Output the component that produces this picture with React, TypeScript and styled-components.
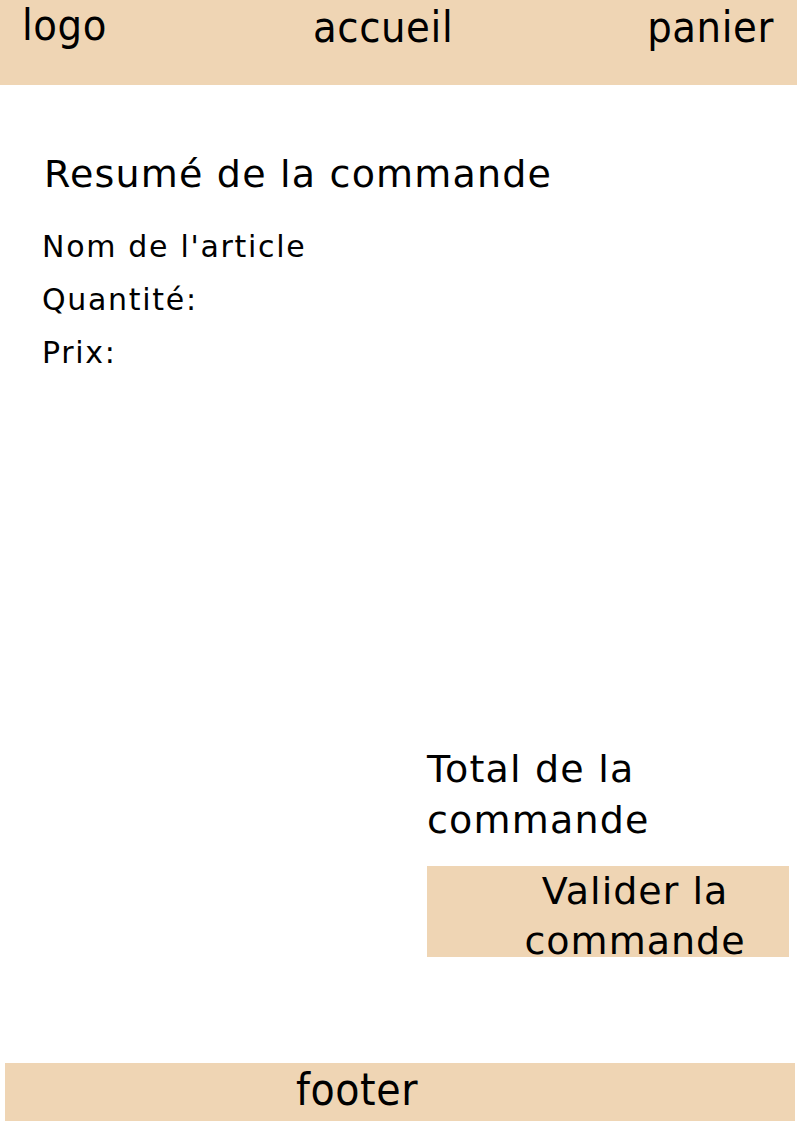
import React from 'react';
import styled, { createGlobalStyle } from 'styled-components';

const GlobalStyle = createGlobalStyle`
  body {
    margin: 0;
    background: #fff;
    color: #000;
    font-family: "DejaVu Sans", Verdana, sans-serif;
  }
`;

const Page = styled.div`
  min-height: 100vh;
  display: flex;
  flex-direction: column;
`;

const Header = styled.header`
  height: 85px;
  background-color: #efd5b4;
  display: flex;
  justify-content: space-between;
  align-items: flex-start;
  padding: 2px 23px 0 22px;
  box-sizing: border-box;
`;

const NavItem = styled.span<{ $shift?: number; $lift?: number }>`
  font-family: "DejaVu Sans Condensed", "DejaVu Sans", sans-serif;
  font-stretch: condensed;
  font-size: 43px;
  letter-spacing: 0.6px;
  margin-left: ${(p) => p.$shift ?? 0}px;
  margin-top: ${(p) => -(p.$lift ?? 0)}px;
`;

const Main = styled.main`
  flex: 1;
  display: flex;
  flex-direction: column;
  padding: 67px 8px 0 42px;
`;

const Title = styled.h1`
  font-size: 38px;
  font-weight: normal;
  margin: 0 0 24px 2px;
  letter-spacing: 1.2px;
`;

const Details = styled.div`
  display: flex;
  flex-direction: column;
`;

const Line = styled.div`
  font-size: 30px;
  line-height: 53px;
  letter-spacing: 1.7px;
`;

const Summary = styled.div`
  margin: auto 0 106px 385px;
  display: flex;
  flex-direction: column;
  gap: 20px;
`;

const Total = styled.div`
  font-size: 38px;
  line-height: 51px;
  letter-spacing: 1.2px;
`;

const ValidateButton = styled.button`
  height: 91px;
  border: none;
  background-color: #efd5b4;
  padding: 0 0 0 54px;
  font-family: "DejaVu Sans", Verdana, sans-serif;
  font-size: 38px;
  line-height: 50px;
  letter-spacing: 1px;
  color: #000;
  text-align: center;
  display: block;
  overflow: visible;
`;

const Footer = styled.footer`
  height: 58px;
  margin: 0 2px 0 5px;
  background-color: #efd5b4;
  font-family: "DejaVu Sans Condensed", "DejaVu Sans", sans-serif;
  font-stretch: condensed;
  font-size: 44px;
  letter-spacing: 0.6px;
  line-height: 54px;
  text-align: center;
  padding-right: 86px;
`;

export default function App() {
  return (
    <>
      <GlobalStyle />
      <Page>
        <Header>
          <NavItem $lift={2}>logo</NavItem>
          <NavItem $shift={12}>accueil</NavItem>
          <NavItem>panier</NavItem>
        </Header>
        <Main>
          <Title>Resumé de la commande</Title>
          <Details>
            <Line>Nom de l'article</Line>
            <Line>Quantité:</Line>
            <Line>Prix:</Line>
          </Details>
          <Summary>
            <Total>
              Total de la
              <br />
              commande
            </Total>
            <ValidateButton>
              Valider la
              <br />
              commande
            </ValidateButton>
          </Summary>
        </Main>
        <Footer>footer</Footer>
      </Page>
    </>
  );
}
